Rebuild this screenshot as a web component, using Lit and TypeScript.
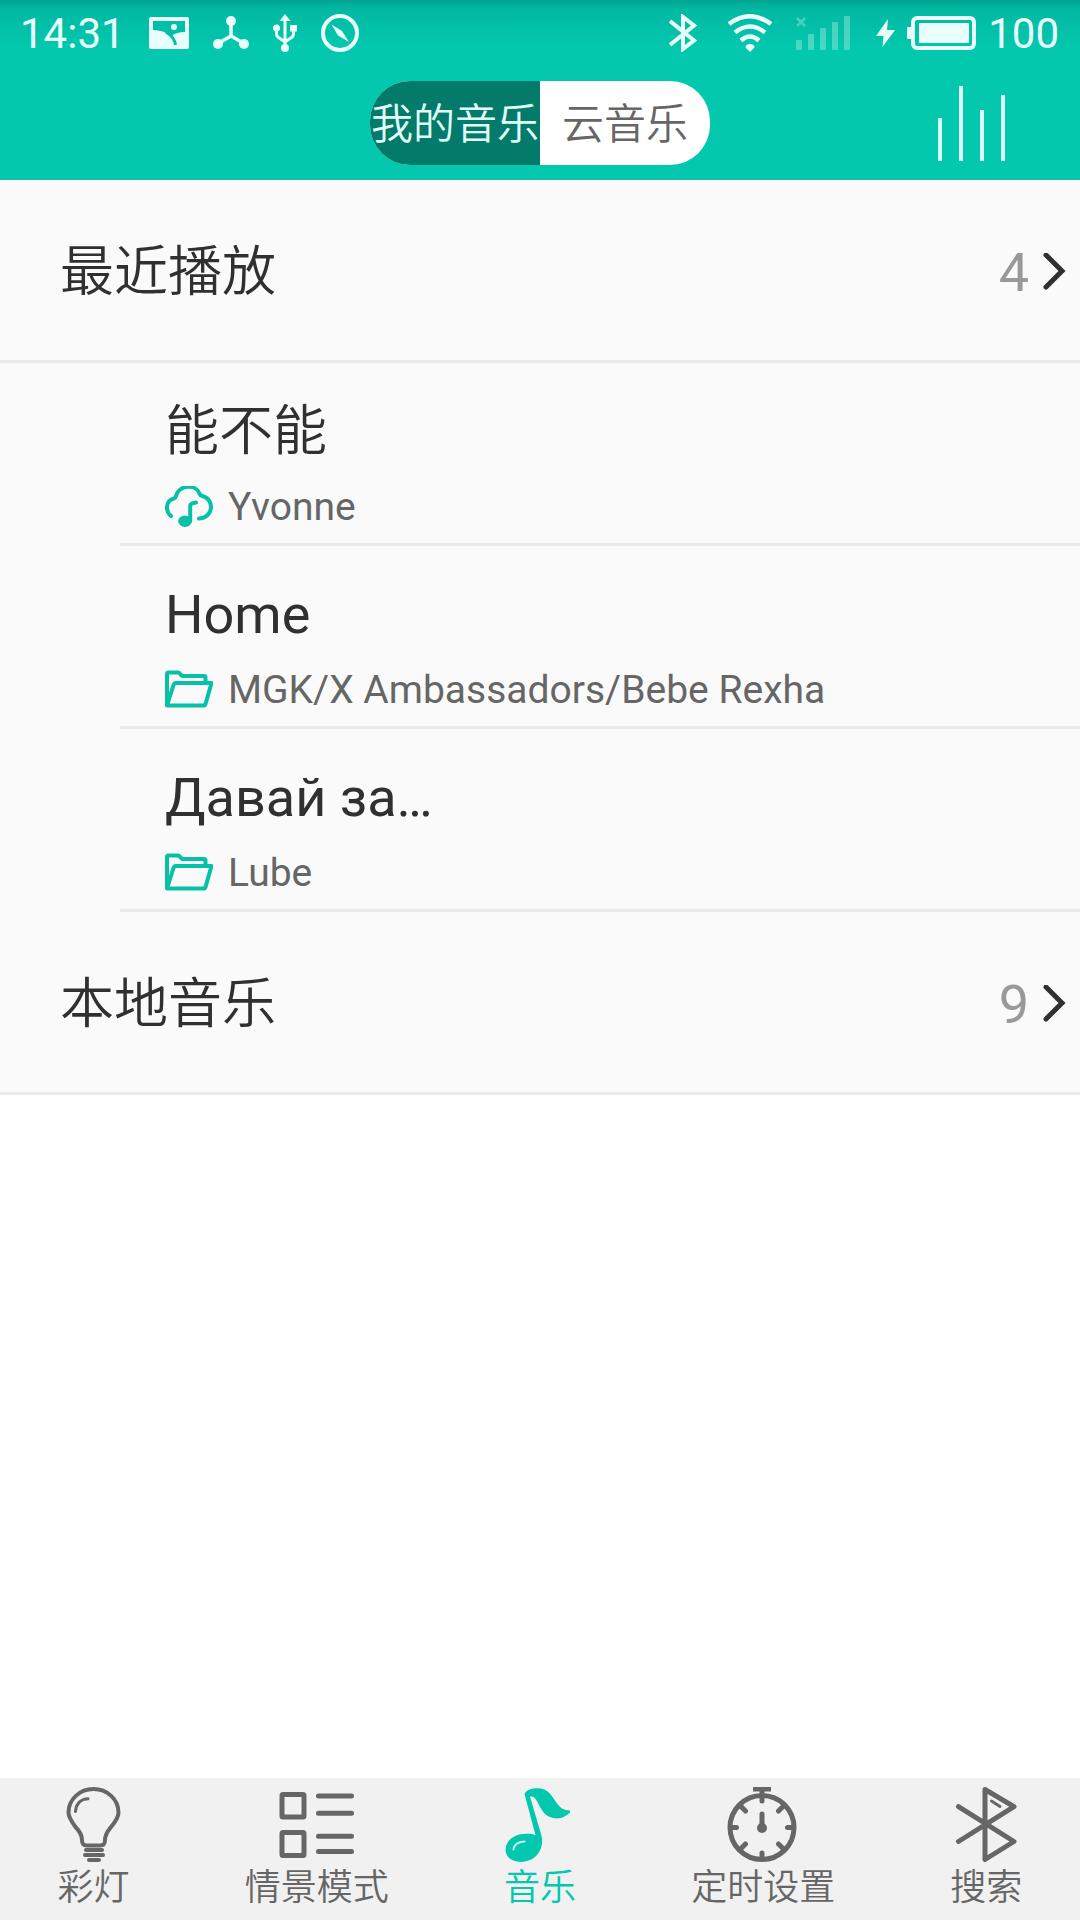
import { LitElement, html, svg, css } from "lit";
import { customElement, state } from "lit/decorators.js";
import { classMap } from "lit/directives/class-map.js";

interface Song {
  title: string;
  lang: string;
  artist: string;
  source: "cloud" | "folder";
}

const songs: Song[] = [
  { title: "能不能", lang: "zh", artist: "Yvonne", source: "cloud" },
  { title: "Home", lang: "en", artist: "MGK/X Ambassadors/Bebe Rexha", source: "folder" },
  { title: "Давай за…", lang: "ru", artist: "Lube", source: "folder" },
];

const sourceIcons = {
  cloud: html`<svg class="source" width="48" height="42" viewBox="0 1 48 42" aria-hidden="true">
    <path class="line" d="M6 31C0 26 .5 15.500 9 13.500C10 13.200 10.600 12.500 11 11C14 -.5 31 -1 34.500 8.500C35 10 36 10.600 37.500 11C50 14.500 48.500 33 34 33.600" />
    <path class="line" d="M25.200 36V21C25.200 19 27 18 31 17.500" />
    <ellipse class="fill" cx="20" cy="36.300" rx="6.800" ry="5.700" />
  </svg>`,
  folder: html`<svg class="source" width="48" height="42" viewBox="0 -2 48 42" aria-hidden="true">
    <path class="line" d="M2 34.500V3Q2 1.500 3.500 1.500H13Q14 1.500 15 2.800L16 4Q17 5 18 5H39Q40.500 5 40.500 6.500V11.500M2 34.500L8.500 14Q9.200 12 11 12H46.500L40.500 33Q40 34.500 38.500 34.500Z" />
  </svg>`,
};

const tabs = [
  {
    label: "彩灯",
    icon: svg`<path class="s4" d="M31 58.500h13c4 0 5-2 5-5.500 0-6 3-9 6-13 5-6 7.500-10 7.500-14.500A25 23.500 0 1 0 12.500 25.500c0 4.500 3 9 7 14.500 4 4 6.500 8 6.500 13 0 3.500 1 5.500 5 5.500z"/>
      <path class="s3" d="M19.500 24.500C20 17 24.500 12 32 11.700"/>
      <path class="s4" d="M30 63h16M29 68h18M33 73h10"/>`,
  },
  {
    label: "情景模式",
    icon: svg`<rect class="s5" x="3" y="7.500" width="22" height="22.500" rx="1"/>
      <rect class="s5" x="3" y="45.500" width="22" height="23" rx="1"/>
      <path class="s5" d="M39.500 9h33M39.500 26.300h33M39.500 49.300h33M39.500 64.500h33"/>`,
  },
  {
    label: "音乐",
    icon: svg`<path class="solid" d="M22.500 7C24 2.500 31 .8 37 1.300C46 2 50 9 54 15C58 21 62 23.500 68 23.400V25.500C64 29.500 58 32.500 51 31C42 29 39 22 36 16C34 12 32 9 28 9.500L39 47C42 56 39 66 31 71.500C20 78 5 75 3.600 64C3 54 12 46.500 25 46.800C29 46.800 31 47 33.500 48.300z"/>
      <path class="shine" d="M11.500 62.500C12 58 16 54.500 22.500 54.500"/>`,
  },
  {
    label: "定时设置",
    icon: svg`<circle class="s5" cx="37" cy="40.500" r="32"/>
      <path class="s5" d="M37 3v11M11.500 40.500H7.500M62.500 40.500h4M37 66v4M16.500 20l4 4M57.500 20l-4 4M16.500 61l4-4M57.500 61l-4-4M37 27v12"/>
      <path class="solid" d="M28 0h18v4.500H28z"/><circle class="solid" cx="37" cy="41" r="5"/>`,
  },
  {
    label: "搜索",
    icon: svg`<path class="s5" d="M10.500 19.700L66 54.500L37 72.500V2.500L66 19.700L10.500 54.500"/>
      <path class="s3" d="M43.500 14l8.500 5.500"/>`,
  },
];

@customElement("app-root")
export class AppRoot extends LitElement {
  @state() private source = 0;
  @state() private tab = 2;

  static styles = css`
    :host {
      display: flex;
      flex-direction: column;
      min-height: 100vh;
      background: #fff;
      color: #303030;
      font-family: Roboto, "Noto Sans CJK SC", sans-serif;
      font-size: 54px;
    }
    * { box-sizing: border-box; }
    svg { display: block; flex: none; }
    button {
      margin: 0;
      padding: 0;
      border: 0;
      background: none;
      color: inherit;
      font: inherit;
      cursor: pointer;
    }
    .top {
      background: linear-gradient(#00a491, #02b9a2 10px, #03c8ae 48px);
      color: #e9fffc;
    }
    .status {
      display: flex;
      justify-content: space-between;
      height: 66px;
      padding: 0 21px 0 20px;
      font-size: 42px;
      line-height: 64px;
    }
    .status span { padding-top: 2px; }
    .group { display: flex; align-items: center; gap: 24px; }
    .power { display: flex; align-items: center; gap: 12px; }
    .status svg { fill: currentColor; stroke: none; }
    .status .o { fill: none; stroke: currentColor; }
    .status .cut { fill: #03bfa7; }
    .status .crack { fill: none; stroke: #03bfa7; stroke-width: 3; }
    .status .faint { opacity: 0.3; }
    .bar {
      display: grid;
      grid-template-columns: 1fr auto 1fr;
      padding: 15px 75px;
    }
    .switch {
      grid-column: 2;
      display: grid;
      grid-template-columns: 170px 170px;
      height: 84px;
      border-radius: 40px;
      overflow: hidden;
      background: #fff;
    }
    .switch button {
      padding-top: 3px;
      color: #666;
      font-size: 42px;
      font-weight: 350;
      line-height: 81px;
      white-space: nowrap;
    }
    .switch button.on { background: #047a6a; color: #e0fffa; }
    .eq { justify-self: end; }
    .eq svg { fill: #dcfff9; }
    .list { background: #fafafa; }
    .section {
      display: flex;
      align-items: center;
      width: 100%;
      height: 183px;
      padding: 6px 14px 0 60px;
      border-bottom: 3px solid #eaeaea;
      line-height: 64px;
      text-align: left;
    }
    .name { flex: 1; font-weight: 350; }
    .count { color: #999; margin-right: 13px; }
    .chevron { fill: none; stroke: #303030; stroke-width: 5; stroke-linecap: round; }
    .songs { margin: 0; padding: 0 0 0 120px; list-style: none; }
    .song {
      display: flex;
      flex-direction: column;
      gap: 18px;
      width: 100%;
      height: 183px;
      padding: 37px 45px 0;
      border-bottom: 3px solid #eaeaea;
      text-align: left;
    }
    .title { line-height: 64px; }
    .title:lang(zh) { font-weight: 350; }
    .meta {
      display: flex;
      align-items: center;
      gap: 15px;
      color: #666;
      font-size: 39px;
      line-height: 50px;
    }
    .source { stroke-linecap: round; stroke-linejoin: round; }
    .line { fill: none; stroke: #06c0a8; stroke-width: 4; }
    .fill { fill: #06c0a8; }
    .tabs {
      display: flex;
      justify-content: space-around;
      margin-top: auto;
      padding: 9px 0 6px;
      background: #f1f1f1;
    }
    .tab {
      display: flex;
      flex-direction: column;
      align-items: center;
      color: #666;
      font-size: 36px;
      font-weight: 350;
      line-height: 52px;
      text-decoration: none;
    }
    .tab.on { color: #03c8ae; }
    .tab svg {
      overflow: visible;
      fill: none;
      stroke: currentColor;
      stroke-linecap: round;
      stroke-linejoin: round;
    }
    .s3 { stroke-width: 3; }
    .s4 { stroke-width: 4; }
    .s5 { stroke-width: 5; }
    .tab .solid { fill: currentColor; stroke: none; }
    .tab .shine { stroke: #c9fff6; stroke-width: 2; }
  `;

  private renderStatus() {
    return html`<div class="status">
      <div class="group">
        <span>14:31</span>
        <svg width="40" height="32" viewBox="0 0 40 32" aria-hidden="true">
          <rect width="40" height="32" rx="2" />
          <path class="cut" d="M4 4H36V15C30 15 25 17 22.500 19C17 15 11 13 4 13Z" />
          <path class="crack" d="M17 15C22 18 26 23 26.500 28" />
          <circle cx="25" cy="10" r="3" />
        </svg>
        <svg width="36" height="34" viewBox="0 0 36 34" aria-hidden="true">
          <path class="o" stroke-width="3.500" d="M18 5V20L4 28M18 20L32 28" />
          <circle cx="18" cy="5" r="5" /><circle cx="5" cy="28" r="5" /><circle cx="31" cy="28" r="5" />
        </svg>
        <svg width="24" height="38" viewBox="0 0 24 38" aria-hidden="true">
          <path class="o" stroke-width="3" d="M12 5V33M3.500 14V20Q3.500 22 5.500 23.500L12 28L18.500 23.500Q20.500 22 20.500 20V14" />
          <path d="M12 0L17.500 7H6.500Z" />
          <circle cx="3.500" cy="14" r="3.500" /><rect x="17" y="11" width="7" height="6.500" /><circle cx="12" cy="34" r="4" />
        </svg>
        <svg width="38" height="38" viewBox="0 0 38 38" aria-hidden="true">
          <circle class="o" stroke-width="4" cx="19" cy="19" r="17" />
          <path d="M10.500 10.500L21 17L28 28L17 21.500Z" />
        </svg>
      </div>
      <div class="group">
        <svg width="35" height="38" viewBox="0 0 35 38" aria-hidden="true">
          <path class="o" stroke-width="4" d="M1 7L25 26.500L14 35V3L25 11.500L1 31" />
        </svg>
        <svg width="44" height="38" viewBox="0 0 44 38" aria-hidden="true">
          <g class="o" stroke-width="4.500">
            <path d="M1 10Q22 -5.500 43 10" /><path d="M7 18.500Q22 6.500 37 18.500" /><path d="M13 26.500Q22 18.500 31 26.500" />
          </g>
          <path d="M22 38L17.500 33.500Q17.500 30 22 30T26.500 33.500Z" />
        </svg>
        <svg class="faint" width="56" height="34" viewBox="0 0 56 34" aria-hidden="true">
          <rect y="24" width="6" height="10" rx="1" /><rect x="12" y="18" width="6" height="16" rx="1" />
          <rect x="24" y="12" width="6" height="22" rx="1" /><rect x="36" y="6" width="6" height="28" rx="1" />
          <rect x="48" width="6" height="34" rx="1" />
          <path class="o" stroke-width="2.500" d="M1 2L9 10M9 2L1 10" />
        </svg>
        <div class="power">
          <svg width="19" height="30" viewBox="0 0 19 30" aria-hidden="true">
            <path d="M12 1L0 18H7.500L6.500 29L19 12H11Z" />
          </svg>
          <svg width="69" height="34" viewBox="0 0 69 34" aria-hidden="true">
            <rect class="o" stroke-width="4" x="6" y="2" width="61" height="30" rx="4" />
            <rect x="0" y="11" width="5" height="12" rx="1" /><rect x="12" y="7" width="50" height="20" rx="1" />
          </svg>
          <span>100</span>
        </div>
      </div>
    </div>`;
  }

  private renderSection(name: string, count: number) {
    return html`<button class="section">
      <span class="name">${name}</span>
      <span class="count">${count}</span>
      <svg class="chevron" width="24" height="40" viewBox="0 0 24 40" aria-hidden="true">
        <path d="M4 2L20 18L4 34" />
      </svg>
    </button>`;
  }

  render() {
    return html`
      <header class="top">
        ${this.renderStatus()}
        <div class="bar">
          <div class="switch">
            ${["我的音乐", "云音乐"].map(
              (label, i) => html`<button
                class=${classMap({ on: i === this.source })}
                aria-pressed=${i === this.source ? "true" : "false"}
                @click=${() => (this.source = i)}
              >${label}</button>`,
            )}
          </div>
          <button class="eq" aria-label="均衡器">
            <svg width="67" height="84" viewBox="0 0 67 84" aria-hidden="true">
              <path d="M0 37h4v43h-4zM21 5h4v75h-4zM42 29h4v51h-4zM63 14h4v66h-4z" />
            </svg>
          </button>
        </div>
      </header>
      <main class="list">
        ${this.renderSection("最近播放", 4)}
        <ul class="songs">
          ${songs.map(
            (song) => html`<li>
              <button class="song">
                <span class="title" lang=${song.lang}>${song.title}</span>
                <span class="meta">${sourceIcons[song.source]}<span>${song.artist}</span></span>
              </button>
            </li>`,
          )}
        </ul>
        ${this.renderSection("本地音乐", 9)}
      </main>
      <nav class="tabs">
        ${tabs.map(
          (item, i) => html`<a
            class=${classMap({ tab: true, on: i === this.tab })}
            href="#"
            @click=${(e: Event) => {
              e.preventDefault();
              this.tab = i;
            }}
          >
            <svg width="72" height="75" viewBox="2 0 72 75" aria-hidden="true">${item.icon}</svg>
            <span>${item.label}</span>
          </a>`,
        )}
      </nav>
    `;
  }
}
